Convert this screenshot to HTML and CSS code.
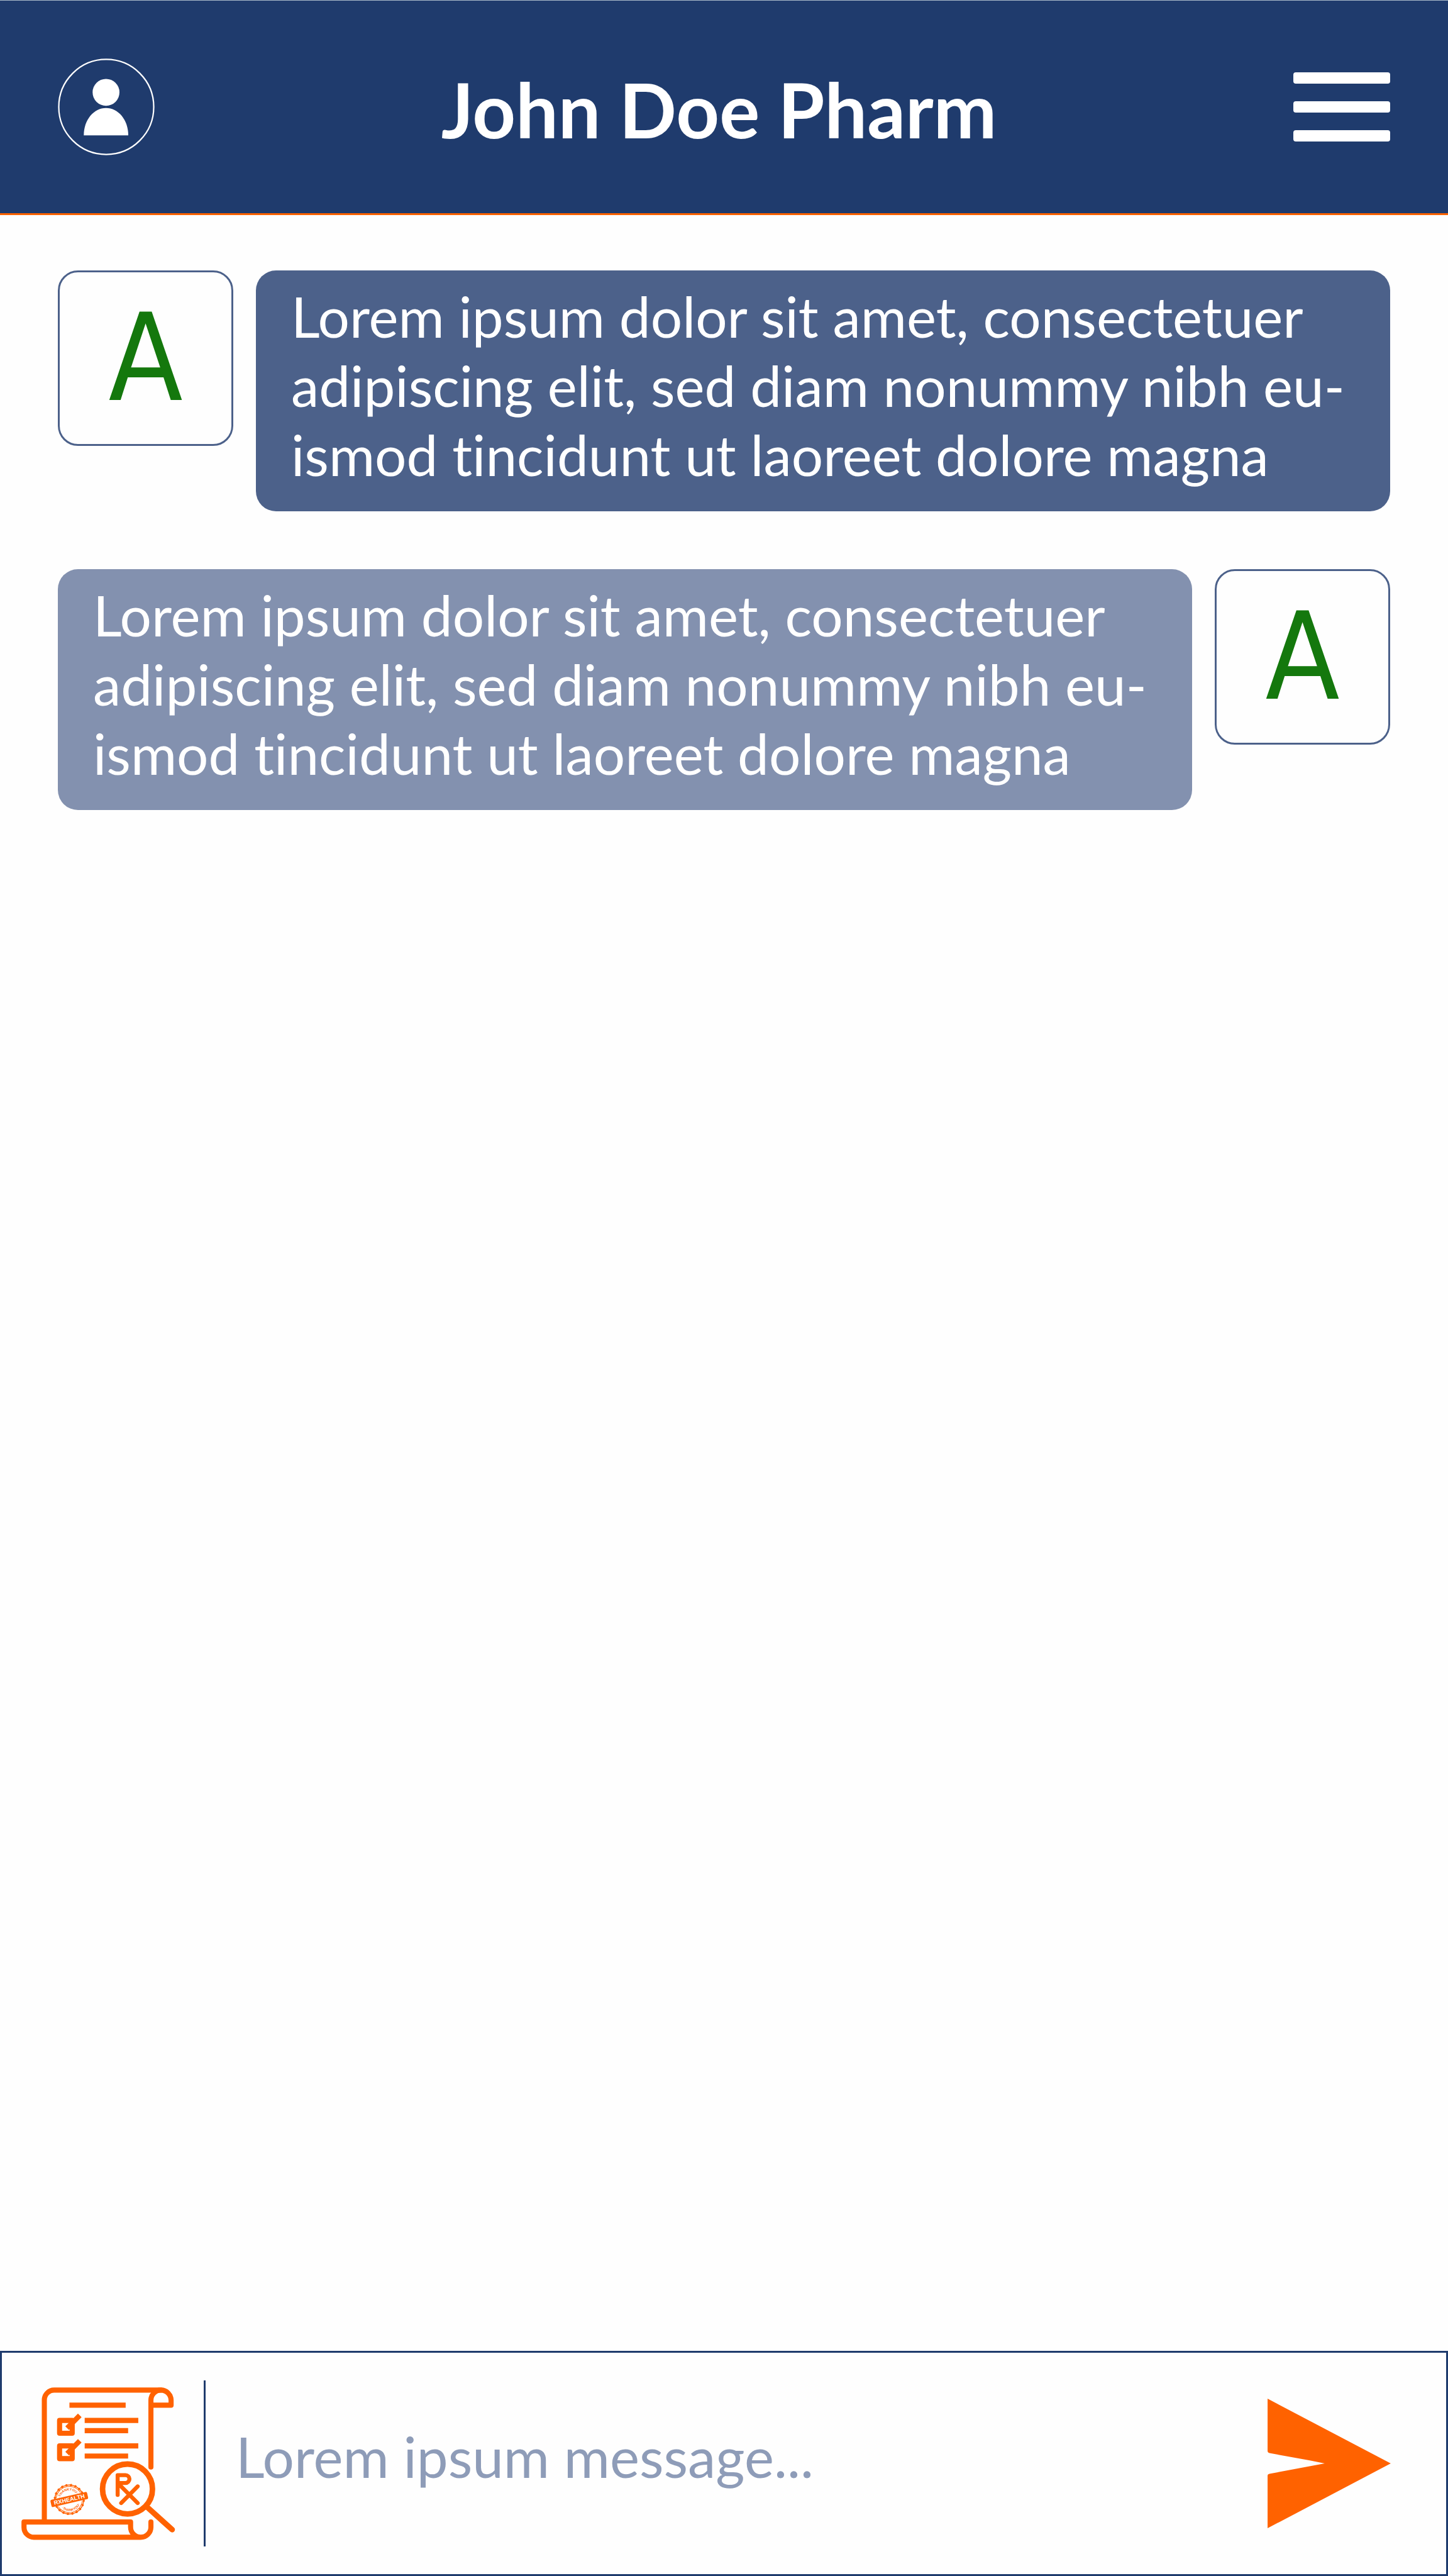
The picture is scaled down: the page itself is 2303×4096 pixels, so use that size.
FILE: index.html
```html
<!DOCTYPE html>
<html lang="en">
<head>
<meta charset="utf-8">
<meta name="viewport" content="width=device-width, initial-scale=1">
<title>John Doe Pharm</title>
<link rel="stylesheet" href="styles.css">
</head>
<body>
<header class="header">
  <button class="icon-button" type="button" aria-label="Profile">
    <svg class="profile-icon" viewBox="125 125 209 209" aria-hidden="true">
      <circle cx="229.5" cy="229.5" r="102.5" fill="none" stroke="#fff" stroke-width="3"/>
      <circle cx="229" cy="198" r="29" fill="#fff"/>
      <path d="M181 291C181 257 203 232 229 232S277 257 277 291Z" fill="#fff"/>
    </svg>
  </button>
  <h1 class="title">John Doe Pharm</h1>
  <button class="icon-button menu" type="button" aria-label="Menu">
    <span class="menu-bar"></span>
    <span class="menu-bar"></span>
    <span class="menu-bar"></span>
  </button>
</header>

<main class="messages">
  <article class="message">
    <div class="avatar">A</div>
    <p class="bubble">Lorem ipsum dolor sit amet, consectetuer<br>adipiscing elit, sed diam nonummy nibh eu-<br>ismod tincidunt ut laoreet dolore magna</p>
  </article>
  <article class="message message-own">
    <div class="avatar">A</div>
    <p class="bubble">Lorem ipsum dolor sit amet, consectetuer<br>adipiscing elit, sed diam nonummy nibh eu-<br>ismod tincidunt ut laoreet dolore magna</p>
  </article>
</main>

<form class="composer">
  <button class="icon-button" type="button" aria-label="Attach prescription">
    <svg class="prescription-icon" viewBox="139 333 1000 992" fill="none" stroke="#ff6200" stroke-width="33" aria-hidden="true">
      <!-- scroll -->
      <path d="M288 1207V415A64 64 0 0 1 352 351H1045A66 66 0 0 1 1111 417V449H980" stroke-linejoin="round"/>
      <path d="M1045 351A65 65 0 0 0 980 416V850" stroke-linecap="round"/>
      <path d="M914 1306H220A64 64 0 0 1 156 1242V1207H848V1240A66 66 0 0 0 914 1306A66 66 0 0 0 980 1240V1207" stroke-linejoin="round" stroke-linecap="round"/>
      <!-- checklist -->
      <path d="M451 449H816M550 548H898M550 614H832M550 713H898M550 779H832"/>
      <path d="M387 548H469V631H387ZM387 713H469V796H387Z" stroke-linejoin="round"/>
      <path d="M436 598L518 515M436 763L518 680"/>
      <!-- magnifier -->
      <circle cx="828" cy="993" r="162" stroke-width="36"/>
      <path d="M958 1113L1118 1257" stroke-width="36" stroke-linecap="round"/>
      <path d="M764 1031V903H815A25 25 0 0 1 815 954H764M778 968L894 1084M894 976L787 1084" stroke-width="26" stroke-linecap="round" stroke-linejoin="round"/>
      <!-- stamp -->
      <g transform="rotate(-13 450 1061)">
        <circle cx="450" cy="1061" r="94" stroke-width="6"/>
        <circle cx="450" cy="1061" r="94" stroke-width="15" stroke-dasharray="0 29.53" stroke-linecap="round"/>
        <circle cx="450" cy="1061" r="85" stroke-width="4"/>
        <path id="stamp-top" stroke="none" d="M391 1061A59 59 0 0 1 509 1061"/>
        <path id="stamp-bottom" stroke="none" d="M375 1061A75 75 0 0 0 525 1061"/>
        <rect class="stamp-clear" x="366" y="1034" width="168" height="54"/>
        <rect class="stamp-band" x="328" y="1037" width="244" height="48" rx="9"/>
        <text class="stamp-name" x="450" y="1074">RXHEALTH</text>
        <text class="stamp-text"><textPath href="#stamp-top" startOffset="50%">·THANKYOU·</textPath></text>
        <text class="stamp-text"><textPath href="#stamp-bottom" startOffset="50%">·THANKYOU·</textPath></text>
      </g>
    </svg>
  </button>
  <input class="composer-input" type="text" aria-label="Message" placeholder="Lorem ipsum message...">
  <button class="icon-button" type="submit" aria-label="Send">
    <svg class="send-icon" viewBox="408 412 792 833" fill="#ff6200" aria-hidden="true">
      <path d="M408 412L1200 829L408 1245V908Q408 897 420 895L775 829L680 809L420 762Q408 760 408 748Z"/>
    </svg>
  </button>
</form>
</body>
</html>
```
FILE: styles.css
```css
* {
  box-sizing: border-box;
}

body {
  display: flex;
  flex-direction: column;
  min-height: 100vh;
  margin: 0;
  background: #fefefe;
  font-family: Lato, "Open Sans", sans-serif;
  font-variant-ligatures: none;
}

.icon-button {
  flex: none;
  padding: 0;
  border: 0;
  background: none;
  cursor: pointer;
}

.icon-button svg {
  display: block;
}

.header {
  display: flex;
  align-items: center;
  padding: 92px;
  border-top: 1px solid #a9bac9;
  border-bottom: 3px solid #ff6200;
  background: #1f3b6d;
}

.profile-icon {
  width: 154px;
  height: 154px;
}

.title {
  flex: 1;
  margin: 0;
  padding: 8px 16px 0 0;
  color: #fff;
  font-size: 120px;
  font-weight: 700;
  line-height: 146px;
  text-align: center;
}

.menu {
  display: flex;
  flex-direction: column;
  gap: 28px;
  width: 154px;
}

.menu-bar {
  height: 18px;
  border-radius: 4px;
  background: #fff;
}

.messages {
  display: flex;
  flex: 1;
  flex-direction: column;
  gap: 92px;
  padding: 88px 92px;
}

.message {
  display: flex;
  align-items: flex-start;
  gap: 36px;
}

.message-own {
  flex-direction: row-reverse;
}

.avatar {
  flex: none;
  width: 279px;
  height: 279px;
  border: 3px solid #4c618a;
  border-radius: 32px;
  color: #14780d;
  font-family: "DejaVu Sans Condensed", "DejaVu Sans", sans-serif;
  font-size: 192px;
  line-height: 273px;
  text-align: center;
}

.bubble {
  flex: 1;
  margin: 0;
  padding: 18px 56px 35px;
  border-radius: 32px;
  background: #4c618a;
  color: #fff;
  font-size: 89px;
  line-height: 110px;
}

.message-own .bubble {
  background: #8391af;
}

.composer {
  display: flex;
  align-items: center;
  padding: 44px 88px 44px 31px;
  border: 3px solid #1f3b6d;
}

.prescription-icon {
  width: 245px;
  height: 243px;
}

.composer-input {
  flex: 1;
  min-width: 0;
  height: 264px;
  margin-left: 45px;
  padding: 0 48px 24px;
  border: 0;
  border-left: 3px solid #1f3b6d;
  background: none;
  color: #1f3b6d;
  font: inherit;
  font-size: 89px;
}

.composer-input::placeholder {
  color: #8e9cb8;
  opacity: 1;
}

.send-icon {
  width: 196px;
  height: 206px;
}

.stamp-clear {
  fill: #fefefe;
  stroke: none;
}

.stamp-band {
  fill: #ff6200;
  stroke: none;
}

.stamp-name,
.stamp-text {
  stroke: none;
  font-weight: 700;
  text-anchor: middle;
}

.stamp-name {
  fill: #fefefe;
  font-size: 38px;
}

.stamp-text {
  fill: #ff6200;
  font-size: 22px;
}
```
